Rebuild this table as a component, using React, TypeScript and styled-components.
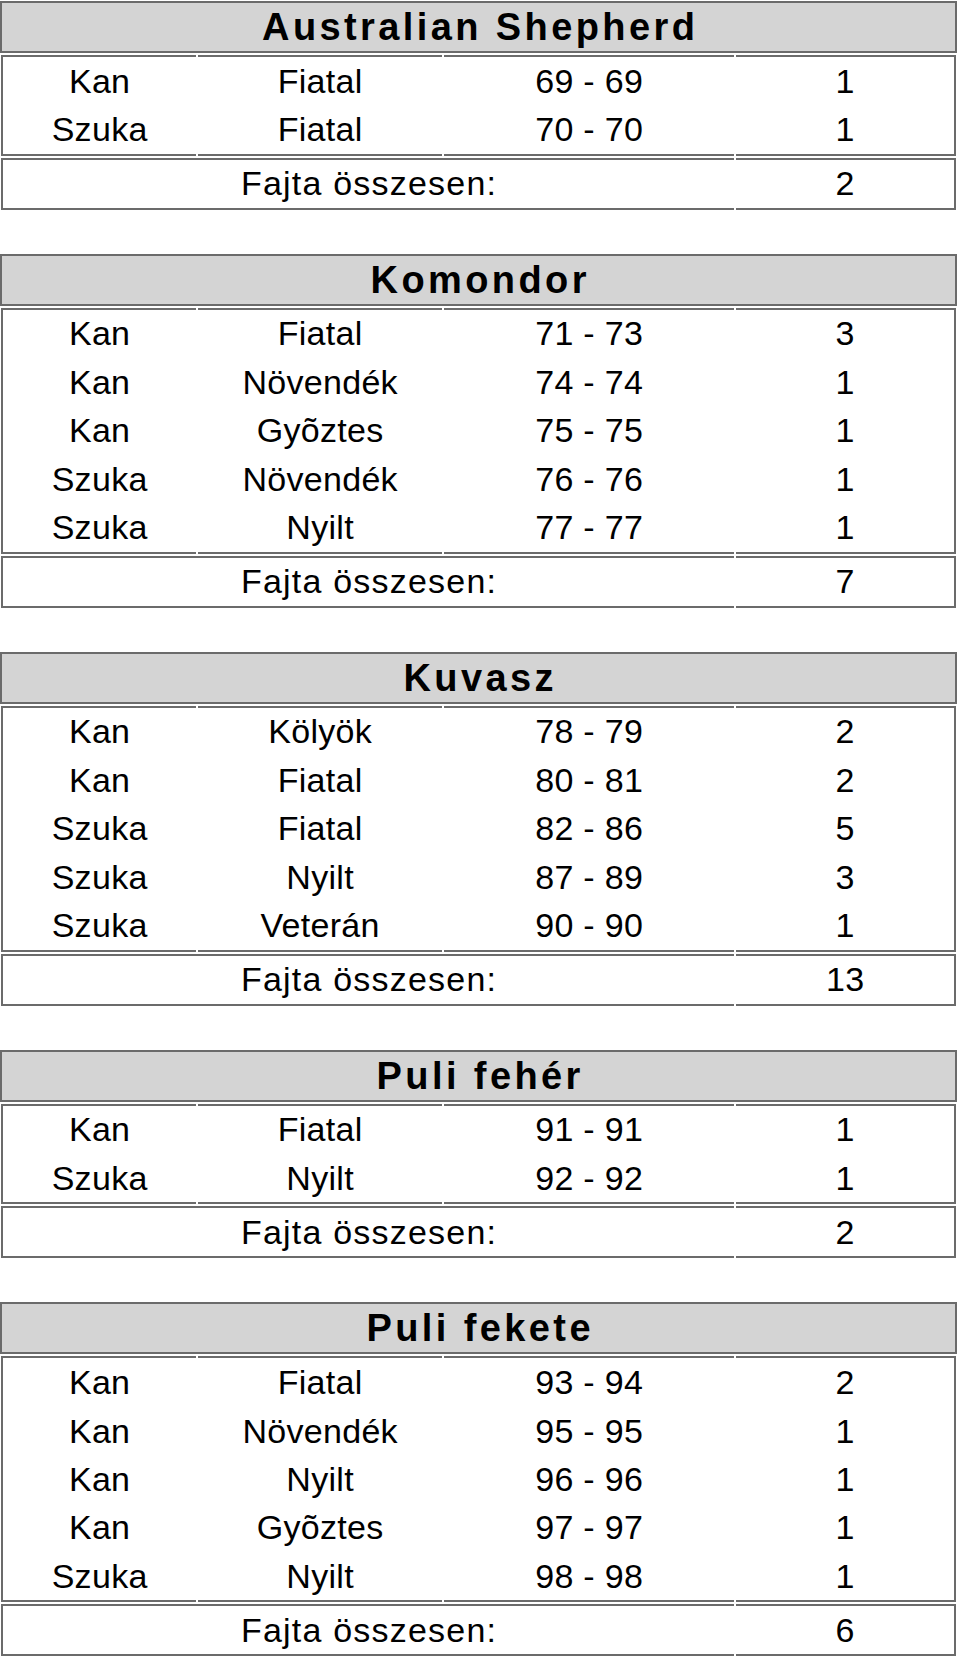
import React from 'react';
import styled, { createGlobalStyle } from 'styled-components';

const LINE = '#6b6b6b';
const DATA_COLS = '193px 244px 290px 1fr';
const SUM_COLS = '731px 1fr';

const GlobalStyle = createGlobalStyle`
  html, body { margin: 0; padding: 0; background: #ffffff; }
  body { font-family: "Liberation Sans", Arial, Helvetica, sans-serif; color: #000; }
`;

const Page = styled.main`
  width: 957px;
  padding-top: 1px;
  display: flex;
  flex-direction: column;
  gap: 44px;
`;

const Section = styled.section`
  display: flex;
  flex-direction: column;
  gap: 2px;
`;

const Header = styled.h2`
  margin: 0;
  height: 52px;
  box-sizing: border-box;
  border: 2px solid ${LINE};
  background: #d4d4d4;
  display: flex;
  align-items: center;
  justify-content: center;
  font-size: 38px;
  font-weight: 700;
  letter-spacing: 3.4px;
  padding-left: 3.4px;
  padding-top: 1px;
`;

const Block = styled.div`
  margin: 0 1px;
  border-left: 2px solid ${LINE};
  border-right: 2px solid ${LINE};
`;

const Rule = styled.div<{ $cols: string }>`
  display: grid;
  grid-template-columns: ${(p) => p.$cols};
  column-gap: 2px;
  height: 2px;
`;

const Segment = styled.div`
  background: ${LINE};
`;

const Row = styled.div<{ $cols: string; $h: number }>`
  display: grid;
  grid-template-columns: ${(p) => p.$cols};
  column-gap: 2px;
  height: ${(p) => p.$h}px;
`;

const Cell = styled.div<{ $spacing?: number }>`
  display: flex;
  align-items: center;
  justify-content: center;
  font-size: 34px;
  letter-spacing: ${(p) => p.$spacing ?? 0.3}px;
  padding-left: ${(p) => p.$spacing ?? 0.3}px;
  white-space: nowrap;
`;

type Entry = [string, string, string, number];
type Breed = { name: string; rows: Entry[]; total: number };

const breeds: Breed[] = [
  {
    name: 'Australian Shepherd',
    rows: [
      ['Kan', 'Fiatal', '69 - 69', 1],
      ['Szuka', 'Fiatal', '70 - 70', 1],
    ],
    total: 2,
  },
  {
    name: 'Komondor',
    rows: [
      ['Kan', 'Fiatal', '71 - 73', 3],
      ['Kan', 'Növendék', '74 - 74', 1],
      ['Kan', 'Gyõztes', '75 - 75', 1],
      ['Szuka', 'Növendék', '76 - 76', 1],
      ['Szuka', 'Nyilt', '77 - 77', 1],
    ],
    total: 7,
  },
  {
    name: 'Kuvasz',
    rows: [
      ['Kan', 'Kölyök', '78 - 79', 2],
      ['Kan', 'Fiatal', '80 - 81', 2],
      ['Szuka', 'Fiatal', '82 - 86', 5],
      ['Szuka', 'Nyilt', '87 - 89', 3],
      ['Szuka', 'Veterán', '90 - 90', 1],
    ],
    total: 13,
  },
  {
    name: 'Puli fehér',
    rows: [
      ['Kan', 'Fiatal', '91 - 91', 1],
      ['Szuka', 'Nyilt', '92 - 92', 1],
    ],
    total: 2,
  },
  {
    name: 'Puli fekete',
    rows: [
      ['Kan', 'Fiatal', '93 - 94', 2],
      ['Kan', 'Növendék', '95 - 95', 1],
      ['Kan', 'Nyilt', '96 - 96', 1],
      ['Kan', 'Gyõztes', '97 - 97', 1],
      ['Szuka', 'Nyilt', '98 - 98', 1],
    ],
    total: 6,
  },
];

const SegmentedRule: React.FC<{ cols: string; count: number }> = ({ cols, count }) => (
  <Rule $cols={cols}>
    {Array.from({ length: count }).map((_, i) => (
      <Segment key={i} />
    ))}
  </Rule>
);

const BreedSection: React.FC<{ breed: Breed }> = ({ breed }) => (
  <Section>
    <Header>{breed.name}</Header>
    <Block>
      <SegmentedRule cols={DATA_COLS} count={4} />
      {breed.rows.map((r, i) => (
        <Row key={i} $cols={DATA_COLS} $h={48.4}>
          <Cell>{r[0]}</Cell>
          <Cell>{r[1]}</Cell>
          <Cell>{r[2]}</Cell>
          <Cell>{r[3]}</Cell>
        </Row>
      ))}
      <SegmentedRule cols={DATA_COLS} count={4} />
    </Block>
    <Block>
      <SegmentedRule cols={SUM_COLS} count={2} />
      <Row $cols={SUM_COLS} $h={48}>
        <Cell $spacing={1.2}>Fajta összesen:</Cell>
        <Cell>{breed.total}</Cell>
      </Row>
      <SegmentedRule cols={SUM_COLS} count={2} />
    </Block>
  </Section>
);

export default function App() {
  return (
    <>
      <GlobalStyle />
      <Page>
        {breeds.map((b) => (
          <BreedSection key={b.name} breed={b} />
        ))}
      </Page>
    </>
  );
}
